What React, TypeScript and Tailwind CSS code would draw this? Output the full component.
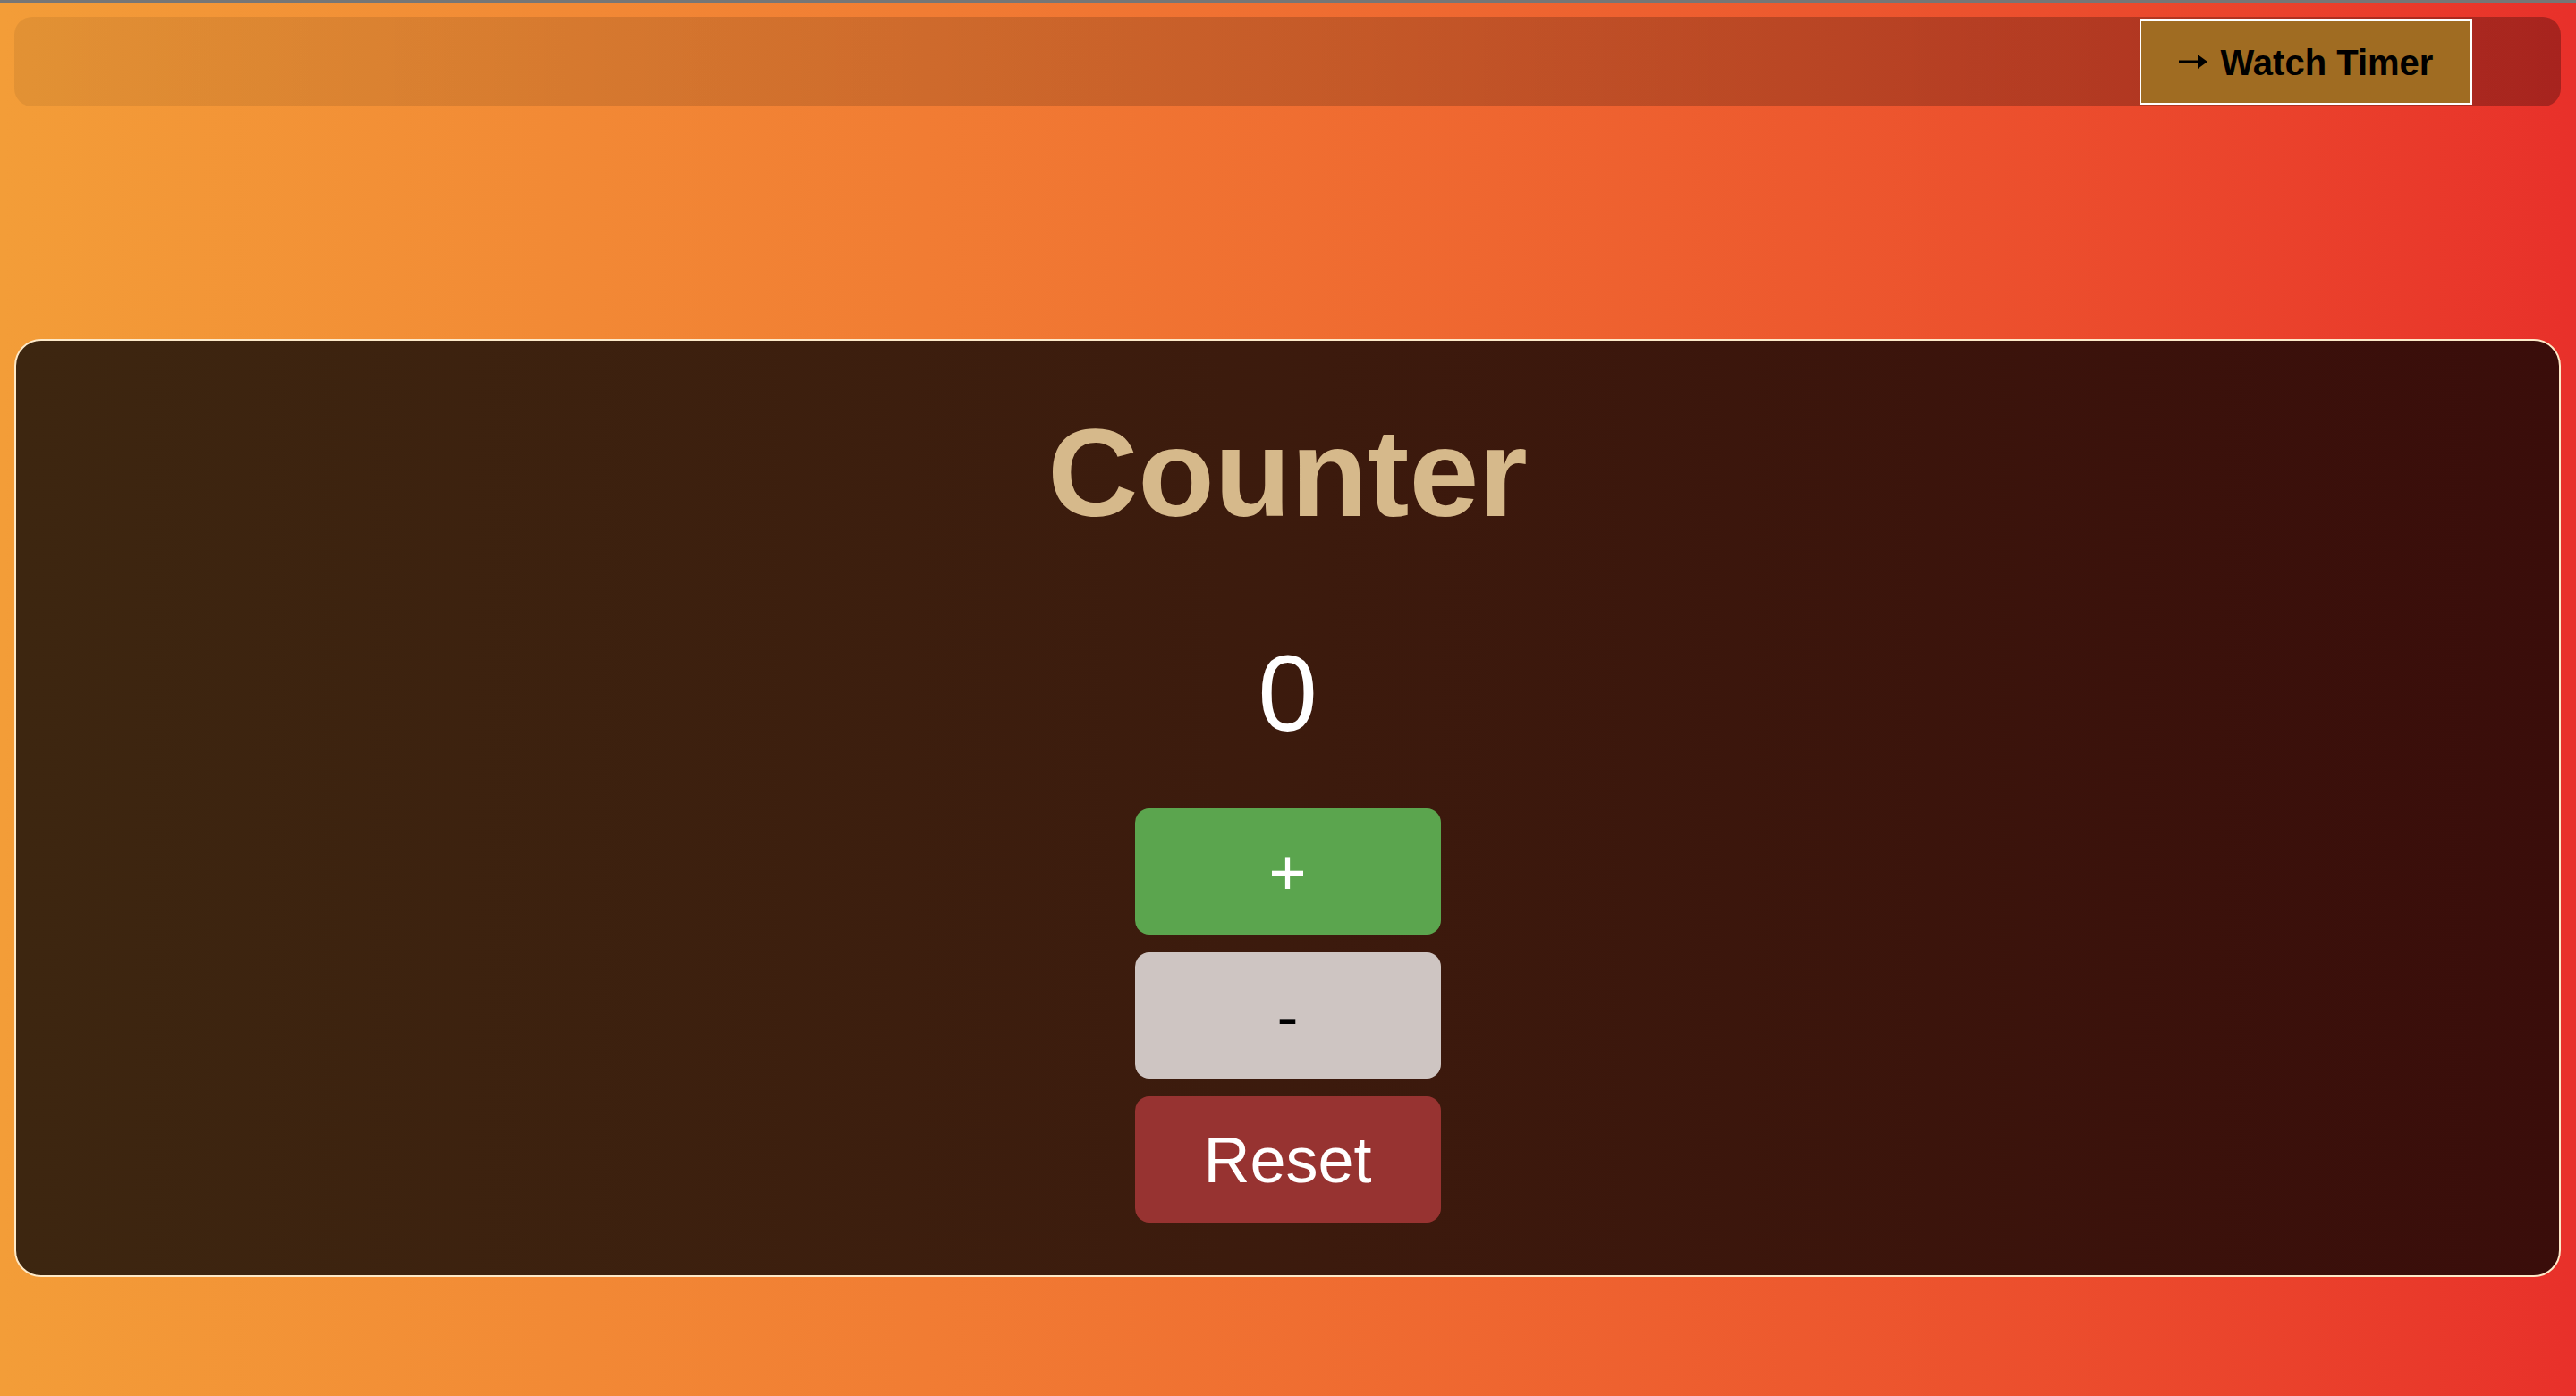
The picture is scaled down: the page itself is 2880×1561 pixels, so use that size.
import { useState } from 'react';

export default function App() {
    const [count, setCount] = useState(0);

    return (
        <div className="min-h-[1561px] border-t-[3px] border-[#767676] bg-linear-to-r from-[#f39d38] to-[#e8302a] pl-4 pr-[17px] pt-4 font-['Liberation_Sans',Arial,sans-serif]">
            <nav className="flex h-[100px] items-center justify-end rounded-[20px] bg-linear-to-r from-black/[0.07] to-black/[0.28] pr-[99px]">
                <button className="flex h-[96px] w-[372px] items-center justify-center gap-[15px] border-2 border-white bg-[#a06c22] pt-[2px] text-[40px] font-bold text-black">
                    <svg width="32" height="18" viewBox="0 0 32 18" className="mt-[-2px]">
                        <line x1="0" y1="9" x2="24" y2="9" stroke="black" strokeWidth="3" />
                        <path d="M21 1 L32 9 L21 17 Z" fill="black" />
                    </svg>
                    <span>Watch Timer</span>
                </button>
            </nav>

            <main className="mt-[260px] flex flex-col items-center rounded-[30px] border-2 border-[#fde9c8] bg-linear-to-r from-[#3d2610] to-[#3a0d0a] pb-[59px] pt-[78px]">
                <h1 className="text-[140px] font-bold leading-none text-[#d6b98b]">Counter</h1>
                <p className="mt-[116px] text-[120px] leading-none text-white">{count}</p>
                <div className="mt-[69px] flex flex-col gap-[20px]">
                    <button
                        onClick={() => setCount(count + 1)}
                        className="h-[141px] w-[342px] rounded-[16px] bg-[#5ba54e] text-[72px] leading-none text-white"
                    >
                        +
                    </button>
                    <button
                        onClick={() => setCount(count - 1)}
                        className="h-[141px] w-[342px] rounded-[16px] bg-[#cec5c2] text-[72px] leading-none text-black"
                    >
                        -
                    </button>
                    <button
                        onClick={() => setCount(0)}
                        className="h-[141px] w-[342px] rounded-[16px] bg-[#973331] text-[72px] leading-none text-white"
                    >
                        Reset
                    </button>
                </div>
            </main>
        </div>
    );
}
